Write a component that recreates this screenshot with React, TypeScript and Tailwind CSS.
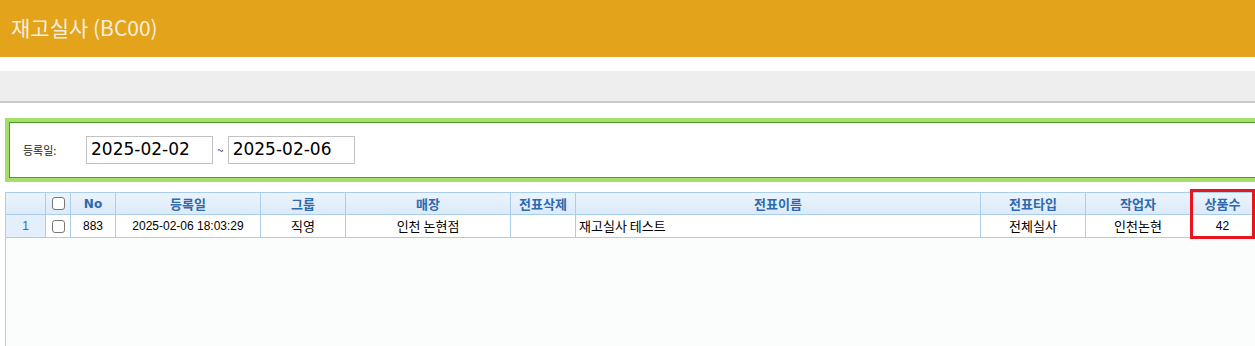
import React from "react";

const cols = "grid-cols-[40px_25px_45px_145px_85px_165px_65px_405px_105px_105px_64px]";

function Box() {
  return <span className="inline-block w-[13px] h-[13px] rounded-[3px] border border-[#777] bg-white" />;
}

export default function App() {
  const headers = ["", "box", "No", "등록일", "그룹", "매장", "전표삭제", "전표이름", "전표타입", "작업자", "상품수"];
  const row = ["1", "box", "883", "2025-02-06 18:03:29", "직영", "인천 논현점", "", "재고실사 테스트", "전체실사", "인천논현", "42"];
  return (
    <div className="relative w-[1255px] h-[346px] overflow-hidden bg-white" style={{ fontFamily: '"Noto Sans CJK KR", "Noto Sans", sans-serif' }}>
      <div className="h-[57px] bg-[#E3A31B] flex items-center pl-[11px]">
        <span className="text-[21px] text-[#F6EEDC] leading-none pb-[2px]">재고실사 (BC00)</span>
      </div>
      <div className="mt-[14px] h-[32px] bg-[#EEEEEE] border-b-2 border-[#CCCCCC]" />
      <div className="mt-[15px] ml-[5px] w-[1270px] h-[64px] border-4 border-[#A6DE6A]">
        <div className="h-full border border-[#4F9A2E] flex items-center">
          <span className="ml-[13px] w-[63px] text-[11px] text-[#222]">등록일:</span>
          <div className="w-[127px] h-[28px] border border-[#C2C2C2] flex items-center pl-[4px] text-black" style={{ fontFamily: '"DejaVu Sans", sans-serif', fontSize: "17px" }}>2025-02-02</div>
          <span className="mx-[4px] text-[12px] text-[#333]">~</span>
          <div className="w-[127px] h-[28px] border border-[#C2C2C2] flex items-center pl-[4px] text-black" style={{ fontFamily: '"DejaVu Sans", sans-serif', fontSize: "17px" }}>2025-02-06</div>
        </div>
      </div>
      <div className="mt-[10px] ml-[5px] w-[1290px] h-[200px] bg-[#FBFCFC] border-l border-[#A9CDEB]">
        <div className={`grid ${cols} h-[23px] bg-gradient-to-b from-[#EAF4FD] to-[#DCEBF9] border-t border-b border-[#A9CDEB]`}>
          {headers.map((h, i) => (
            <div key={i} className="border-r border-[#A9CDEB] flex items-center justify-center text-[13px] font-bold text-[#2E69AE]" style={i === 2 ? { fontFamily: '"DejaVu Sans", sans-serif', fontSize: "12px" } : undefined}>
              {h === "box" ? <Box /> : h}
            </div>
          ))}
        </div>
        <div className={`grid ${cols} h-[23px] bg-white border-b border-[#A9CDEB]`}>
          {row.map((c, i) => (
            <div
              key={i}
              className={`border-r border-[#A9CDEB] flex items-center text-[13px] ${i === 7 ? "justify-start pl-[3px]" : "justify-center"} ${i === 0 ? "bg-[#E3EFFA] text-[#2E69AE]" : "text-black"}`}
              style={i === 0 || i === 2 || i === 3 || i === 10 ? { fontFamily: '"Liberation Sans", sans-serif', fontSize: "12px" } : undefined}
            >
              {c === "box" ? <Box /> : c}
            </div>
          ))}
        </div>
      </div>
      <div className="absolute left-[1190px] top-[189px] w-[65px] h-[50px] border-[3px] border-[#E8141E]" />
    </div>
  );
}
